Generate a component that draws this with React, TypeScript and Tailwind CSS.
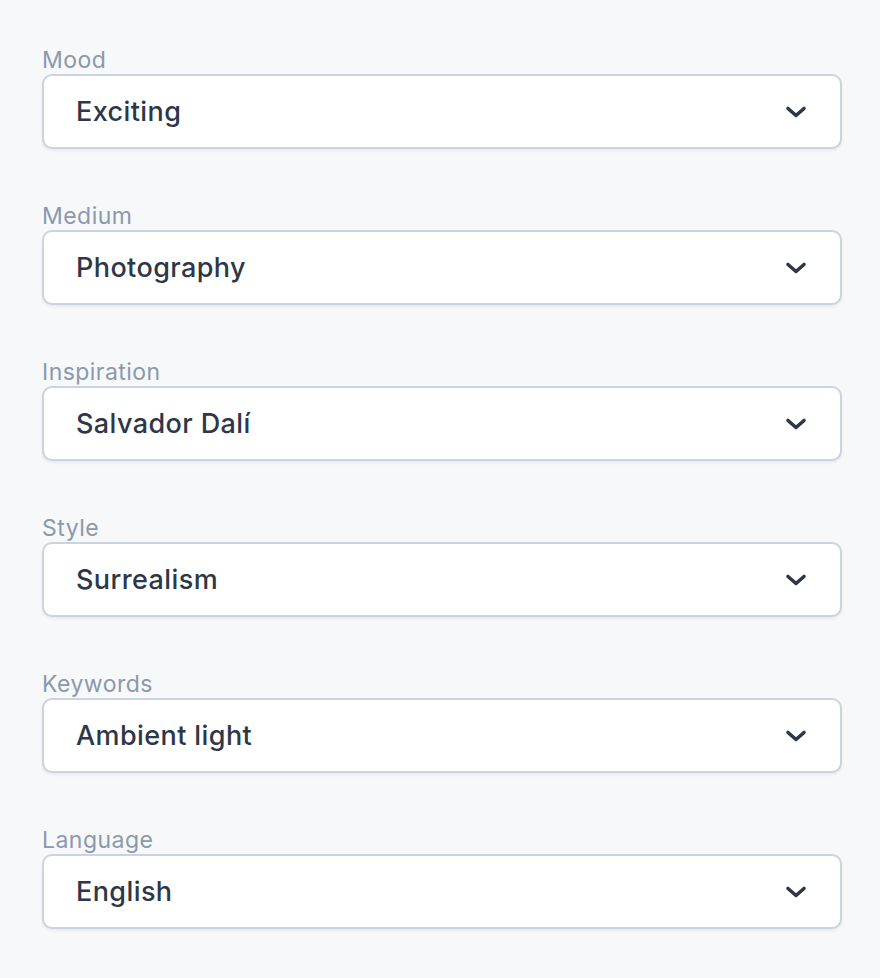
const fields = [
  { label: 'Mood', value: 'Exciting' },
  { label: 'Medium', value: 'Photography' },
  { label: 'Inspiration', value: 'Salvador Dalí' },
  { label: 'Style', value: 'Surrealism' },
  { label: 'Keywords', value: 'Ambient light' },
  { label: 'Language', value: 'English' },
];

function Chevron() {
  return (
    <svg width="22" height="14" viewBox="0 0 22 14" fill="none" className="shrink-0">
      <path d="M3 3.5 L11 10.5 L19 3.5" stroke="#2d3748" strokeWidth="3.6" strokeLinecap="round" strokeLinejoin="round" />
    </svg>
  );
}

function SelectField({ label, value }: { label: string; value: string }) {
  return (
    <div className="flex flex-col">
      <label className="block text-[23px] leading-[28px] tracking-[0.02em] text-[#8a99ad]">{label}</label>
      <div className="flex h-[75px] items-center justify-between rounded-[10px] border-2 border-[#cbd3df] bg-white pl-[32px] pr-[33px] shadow-[0_2px_3px_rgba(15,23,42,0.06)]">
        <span className="pt-[2px] text-[27px] font-medium tracking-[0.015em] text-[#2d3748]">{value}</span>
        <Chevron />
      </div>
    </div>
  );
}

export default function App() {
  return (
    <div
      className="min-h-[978px] w-full bg-[#f7f8fa] px-[42px] pt-[46px]"
      style={{ fontFamily: 'Inter, "Noto Sans", sans-serif' }}
    >
      <div className="flex w-[800px] flex-col gap-[53px]">
        {fields.map((f) => (
          <SelectField key={f.label} label={f.label} value={f.value} />
        ))}
      </div>
    </div>
  );
}
